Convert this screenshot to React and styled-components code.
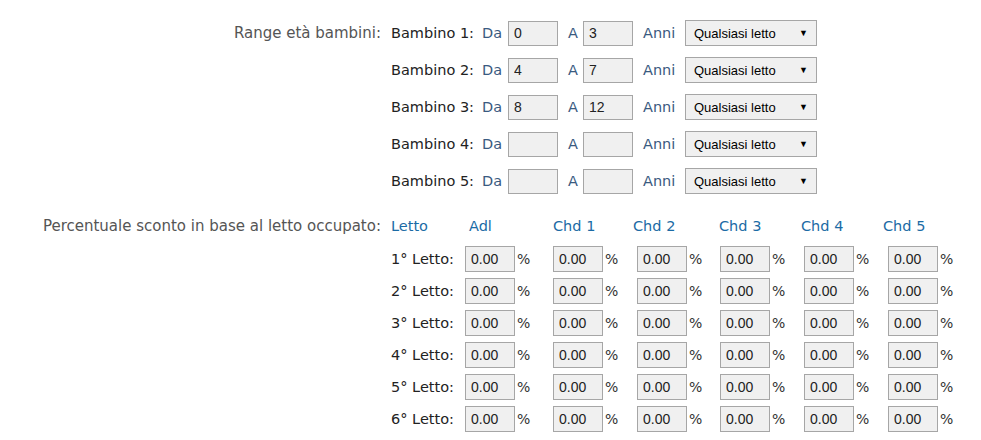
import styled, { createGlobalStyle } from 'styled-components';

const GlobalStyle = createGlobalStyle`
    body {
        margin: 0;
        background: #fff;
        font-family: "DejaVu Sans", "Liberation Sans", sans-serif;
    }
`;

const children = [
    { from: '0', to: '3' },
    { from: '4', to: '7' },
    { from: '8', to: '12' },
    { from: '', to: '' },
    { from: '', to: '' },
];

const headers = ['Letto', 'Adl', 'Chd 1', 'Chd 2', 'Chd 3', 'Chd 4', 'Chd 5'];
const headerWidths = [78, 84, 80, 86, 82, 82, 80];
const cellWidths = [88, 84, 83, 84, 84, 84];

const App = () => {
    return (
        <Page>
            <GlobalStyle />
            <Section>
                <SectionLabel>Range età bambini:</SectionLabel>
                <Rows>
                    {children.map((c, i) => (
                        <ChildRow key={i}>
                            <RowLabel>Bambino {i + 1}:</RowLabel>
                            <Unit $w={26}>Da</Unit>
                            <Field defaultValue={c.from} $w={50} />
                            <Unit $w={15} $pad={10}>A</Unit>
                            <Field defaultValue={c.to} $w={50} />
                            <Unit $pad={10} $w={42}>Anni</Unit>
                            <SelectBox>
                                <span>Qualsiasi letto</span>
                                <Arrow>▼</Arrow>
                            </SelectBox>
                        </ChildRow>
                    ))}
                </Rows>
            </Section>
            <Section $top={8}>
                <SectionLabel>Percentuale sconto in base al letto occupato:</SectionLabel>
                <Rows>
                    <HeaderRow>
                        {headers.map((h, i) => (
                            <Header key={h} style={{ width: headerWidths[i] }}>{h}</Header>
                        ))}
                    </HeaderRow>
                    {[1, 2, 3, 4, 5, 6].map((n) => (
                        <BedRow key={n}>
                            <BedLabel>{n}° Letto:</BedLabel>
                            {cellWidths.map((w, i) => (
                                <Cell key={i} style={{ width: w }}>
                                    <Field defaultValue="0.00" $w={50} $h={26} />
                                    <Percent>%</Percent>
                                </Cell>
                            ))}
                        </BedRow>
                    ))}
                </Rows>
            </Section>
        </Page>
    );
};

const Page = styled.div`
    padding-top: 20px;
    width: 981px;
`;

const Section = styled.div`
    display: grid;
    grid-template-columns: 381px 1fr;
    column-gap: 10px;
    margin-top: ${(p) => p.$top || 0}px;
`;

const SectionLabel = styled.div`
    text-align: right;
    font-size: 15px;
    color: #555;
    line-height: 26px;
    white-space: nowrap;
`;

const Rows = styled.div`
    display: flex;
    flex-direction: column;
`;

const ChildRow = styled.div`
    display: flex;
    align-items: center;
    height: 26px;
    margin-bottom: 11px;
`;

const RowLabel = styled.div`
    width: 91px;
    font-size: 14.5px;
    color: #222;
    white-space: nowrap;
`;

const Unit = styled.div`
    width: ${(p) => p.$w}px;
    padding-left: ${(p) => p.$pad || 0}px;
    box-sizing: content-box;
    font-size: 14.5px;
    color: #3a5a80;
`;

const Field = styled.input`
    box-sizing: border-box;
    width: ${(p) => p.$w}px;
    height: ${(p) => p.$h || 25}px;
    margin: 0;
    padding: 0 0 0 5px;
    border: 1px solid #a6a6a6;
    background: #f0f0f0;
    font-family: "Liberation Sans", Arial, sans-serif;
    font-size: 14px;
    color: #222;
    outline: none;
`;

const SelectBox = styled.div`
    box-sizing: border-box;
    width: 132px;
    height: 26px;
    display: flex;
    align-items: center;
    justify-content: space-between;
    padding: 0 8px 0 8px;
    border: 1px solid #a6a6a6;
    background: #f0f0f0;
    font-family: "Liberation Sans", Arial, sans-serif;
    font-size: 13px;
    color: #000;
`;

const Arrow = styled.span`
    font-size: 9px;
`;

const HeaderRow = styled.div`
    display: flex;
    align-items: center;
    height: 26px;
    margin-bottom: 7px;
`;

const Header = styled.div`
    font-size: 14.5px;
    color: #1b6ba5;
    white-space: nowrap;
`;

const BedRow = styled.div`
    display: flex;
    align-items: center;
    height: 26px;
    margin-bottom: 6px;
`;

const BedLabel = styled.div`
    width: 74px;
    font-size: 14.5px;
    color: #222;
    white-space: nowrap;
`;

const Cell = styled.div`
    display: flex;
    align-items: center;
`;

const Percent = styled.span`
    margin-left: 2px;
    font-size: 14px;
    color: #333;
`;

export default App;
